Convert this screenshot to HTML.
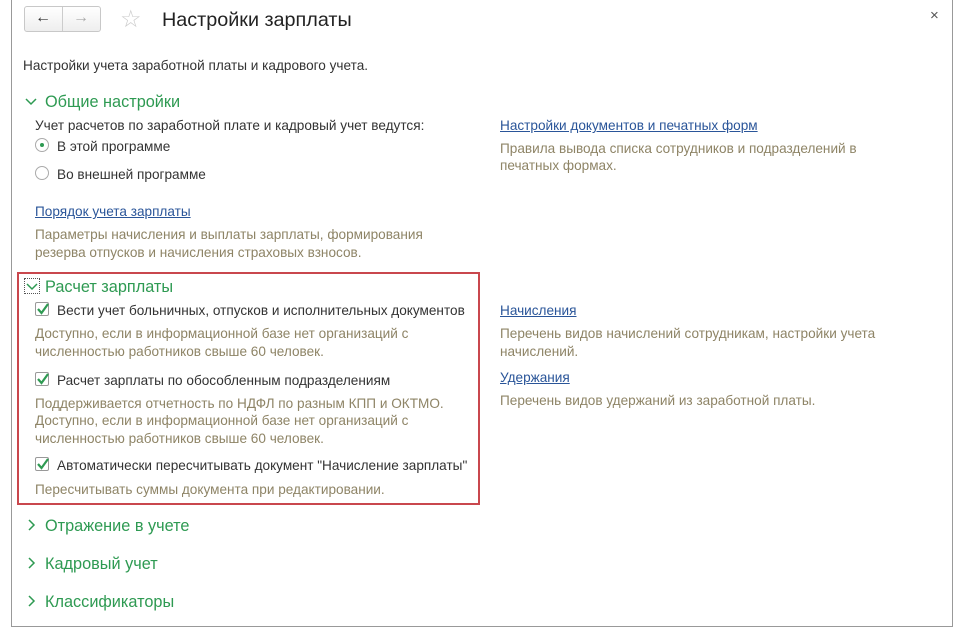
<!DOCTYPE html>
<html><head><meta charset="utf-8"><style>
*{margin:0;padding:0;box-sizing:border-box}
body{width:955px;height:628px;background:#fff;font-family:"Liberation Sans",Arial,sans-serif;font-size:13.6px;color:#333;position:relative;overflow:hidden}
.a{position:absolute;white-space:nowrap;line-height:17px}
.g{color:#2e9a52;font-size:16.3px;line-height:18px}
.d{color:#8e8466}
.l{color:#2a5599;text-decoration:underline}
.cb{position:absolute;width:14px;height:14px;border:1px solid #999;border-radius:2px;background:#fff}
.rb{position:absolute;width:14px;height:14px;border:1px solid #aaa;border-radius:50%;background:#fff}
</style></head><body>
<div style="position:absolute;left:11px;top:0;width:942px;height:627px;border-left:1px solid #999;border-right:1px solid #999;border-bottom:1px solid #999"></div>
<div style="position:absolute;left:24px;top:6px;width:77px;height:26px;border:1px solid #c8c8c8;border-radius:3px;background:linear-gradient(#fff,#eee)"></div>
<div style="position:absolute;left:62px;top:7px;width:1px;height:24px;background:#ccc"></div>
<div class="a" style="left:35px;top:9px;font-size:16px;color:#333">&#8592;</div>
<div class="a" style="left:73px;top:9px;font-size:16px;color:#aaa">&#8594;</div>
<div class="a" style="left:120px;top:6px;font-size:24px;line-height:28px;color:#ccc">&#9734;</div>
<div class="a" style="left:162px;top:8px;font-size:19.8px;line-height:24px;color:#222">Настройки зарплаты</div>
<div class="a" style="left:930px;top:7px;font-size:15px;color:#555">×</div>
<div class="a" style="left:23px;top:57px">Настройки учета заработной платы и кадрового учета.</div>
<svg style="position:absolute;left:25px;top:97px" width="12" height="10"><path d="M1 2 L6 7 L11 2" fill="none" stroke="#2e9a52" stroke-width="1.5"/></svg>
<div class="a g" style="left:45px;top:93px">Общие настройки</div>
<div class="a" style="left:35px;top:117px">Учет расчетов по заработной плате и кадровый учет ведутся:</div>
<div class="rb" style="left:35px;top:138px"></div><div style="position:absolute;left:40px;top:143px;width:4px;height:4px;border-radius:50%;background:#2e9a52"></div>
<div class="a" style="left:57px;top:138px">В этой программе</div>
<div class="rb" style="left:35px;top:166px"></div>
<div class="a" style="left:57px;top:166px">Во внешней программе</div>
<div class="a l" style="left:35px;top:203px">Порядок учета зарплаты</div>
<div class="a d" style="left:35px;top:226px">Параметры начисления и выплаты зарплаты, формирования</div>
<div class="a d" style="left:35px;top:244px">резерва отпусков и начисления страховых взносов.</div>
<div style="position:absolute;left:17px;top:272px;width:463px;height:233px;border:2px solid #c9474d"></div>
<div style="position:absolute;left:24px;top:278px;width:16px;height:16px;border:1px dotted #555"></div>
<svg style="position:absolute;left:26px;top:282px" width="12" height="10"><path d="M1 2 L6 7 L11 2" fill="none" stroke="#2e9a52" stroke-width="1.5"/></svg>
<div class="a g" style="left:45px;top:278px">Расчет зарплаты</div>
<div class="cb" style="left:35px;top:302px"></div><svg style="position:absolute;left:36px;top:302px" width="14" height="14"><path d="M2 7 L5.5 11 L12 2" fill="none" stroke="#2e9a52" stroke-width="2.2"/></svg>
<div class="a" style="left:57px;top:302px">Вести учет больничных, отпусков и исполнительных документов</div>
<div class="a d" style="left:35px;top:325px">Доступно, если в информационной базе нет организаций с</div>
<div class="a d" style="left:35px;top:343px">численностью работников свыше 60 человек.</div>
<div class="cb" style="left:35px;top:372px"></div><svg style="position:absolute;left:36px;top:372px" width="14" height="14"><path d="M2 7 L5.5 11 L12 2" fill="none" stroke="#2e9a52" stroke-width="2.2"/></svg>
<div class="a" style="left:57px;top:372px">Расчет зарплаты по обособленным подразделениям</div>
<div class="a d" style="left:35px;top:395px">Поддерживается отчетность по НДФЛ по разным КПП и ОКТМО.</div>
<div class="a d" style="left:35px;top:412px">Доступно, если в информационной базе нет организаций с</div>
<div class="a d" style="left:35px;top:430px">численностью работников свыше 60 человек.</div>
<div class="cb" style="left:35px;top:457px"></div><svg style="position:absolute;left:36px;top:457px" width="14" height="14"><path d="M2 7 L5.5 11 L12 2" fill="none" stroke="#2e9a52" stroke-width="2.2"/></svg>
<div class="a" style="left:57px;top:457px">Автоматически пересчитывать документ "Начисление зарплаты"</div>
<div class="a d" style="left:35px;top:481px">Пересчитывать суммы документа при редактировании.</div>
<svg style="position:absolute;left:27px;top:518px" width="10" height="14"><path d="M2 2 L7 7 L2 12" fill="none" stroke="#2e9a52" stroke-width="1.5"/></svg>
<div class="a g" style="left:45px;top:517px">Отражение в учете</div>
<svg style="position:absolute;left:27px;top:556px" width="10" height="14"><path d="M2 2 L7 7 L2 12" fill="none" stroke="#2e9a52" stroke-width="1.5"/></svg>
<div class="a g" style="left:45px;top:555px">Кадровый учет</div>
<svg style="position:absolute;left:27px;top:594px" width="10" height="14"><path d="M2 2 L7 7 L2 12" fill="none" stroke="#2e9a52" stroke-width="1.5"/></svg>
<div class="a g" style="left:45px;top:593px">Классификаторы</div>
<div class="a l" style="left:500px;top:117px">Настройки документов и печатных форм</div>
<div class="a d" style="left:500px;top:140px">Правила вывода списка сотрудников и подразделений в</div>
<div class="a d" style="left:500px;top:157px">печатных формах.</div>
<div class="a l" style="left:500px;top:302px">Начисления</div>
<div class="a d" style="left:500px;top:325px">Перечень видов начислений сотрудникам, настройки учета</div>
<div class="a d" style="left:500px;top:343px">начислений.</div>
<div class="a l" style="left:500px;top:369px">Удержания</div>
<div class="a d" style="left:500px;top:392px">Перечень видов удержаний из заработной платы.</div>
</body></html>
